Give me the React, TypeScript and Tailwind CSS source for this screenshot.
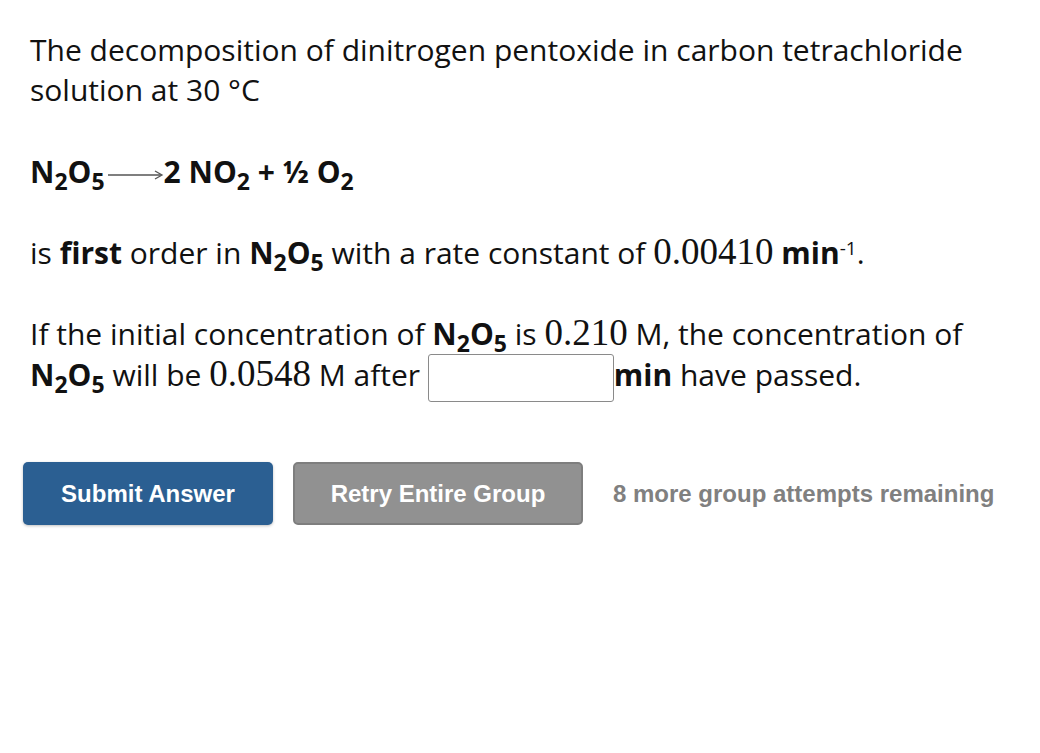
import React from "react";

const sans = "font-['Open_Sans',sans-serif]";
const serif = "font-['Liberation_Serif','DejaVu_Serif',serif]";

function Sub({ children }: { children: React.ReactNode }) {
  return <span className="relative top-[7px] text-[23px] leading-none">{children}</span>;
}

function N2O5() {
  return (
    <b className="font-bold">
      N<Sub>2</Sub>O<Sub>5</Sub>
    </b>
  );
}

function Arrow() {
  return (
    <svg width="56" height="14" viewBox="0 0 56 14" className="ml-[3px] inline-block align-middle">
      <line x1="0" y1="7" x2="53" y2="7" stroke="#555" strokeWidth="1.3" />
      <path d="M47 3 L54 7 L47 11" fill="none" stroke="#555" strokeWidth="1.3" />
    </svg>
  );
}

export default function App() {
  return (
    <div className={`${sans} min-h-[753px] w-[1040px] bg-white px-[30px] pt-[30px] text-[30px] leading-[40px] text-[#111]`}>
      <p>
        The decomposition of dinitrogen pentoxide in carbon tetrachloride
        <br />
        solution at 30 °C
      </p>

      <p className="mt-[42px] font-bold">
        N<Sub>2</Sub>O<Sub>5</Sub>
        <Arrow />2 NO<Sub>2</Sub> + ½ O<Sub>2</Sub>
      </p>

      <p className="mt-[40px]">
        is <b>first</b> order in <N2O5 /> with a rate constant of{" "}
        <span className={`${serif} text-[37px]`}>0.00410</span> <b>min</b>
        <sup className="text-[19px]">-1</sup>.
      </p>

      <p className="mt-[40px]">
        If the initial concentration of <N2O5 /> is <span className={`${serif} text-[37px]`}>0.210</span> M, the
        concentration of
        <br />
        <N2O5 /> will be <span className={`${serif} text-[37px]`}>0.0548</span> M after{" "}
        <input
          type="text"
          className="inline-block h-[48px] w-[186px] rounded-[3px] border border-[#8a8a8a] align-middle outline-none"
        />
        <b>min</b> have passed.
      </p>

      <div className="mt-[60px] -ml-[7px] flex items-center gap-[20px] font-['Liberation_Sans',Arial,sans-serif] text-[24px] font-bold">
        <button className="h-[63px] w-[250px] rounded-[5px] bg-[#2b5f92] text-white shadow-[0_1px_3px_rgba(0,0,0,0.25)]">
          Submit Answer
        </button>
        <button className="h-[63px] w-[290px] rounded-[5px] border-2 border-[#7e7e7e] bg-[#919191] text-white">
          Retry Entire Group
        </button>
        <span className="ml-[10px] text-[24px] text-[#808080]">8 more group attempts remaining</span>
      </div>
    </div>
  );
}
